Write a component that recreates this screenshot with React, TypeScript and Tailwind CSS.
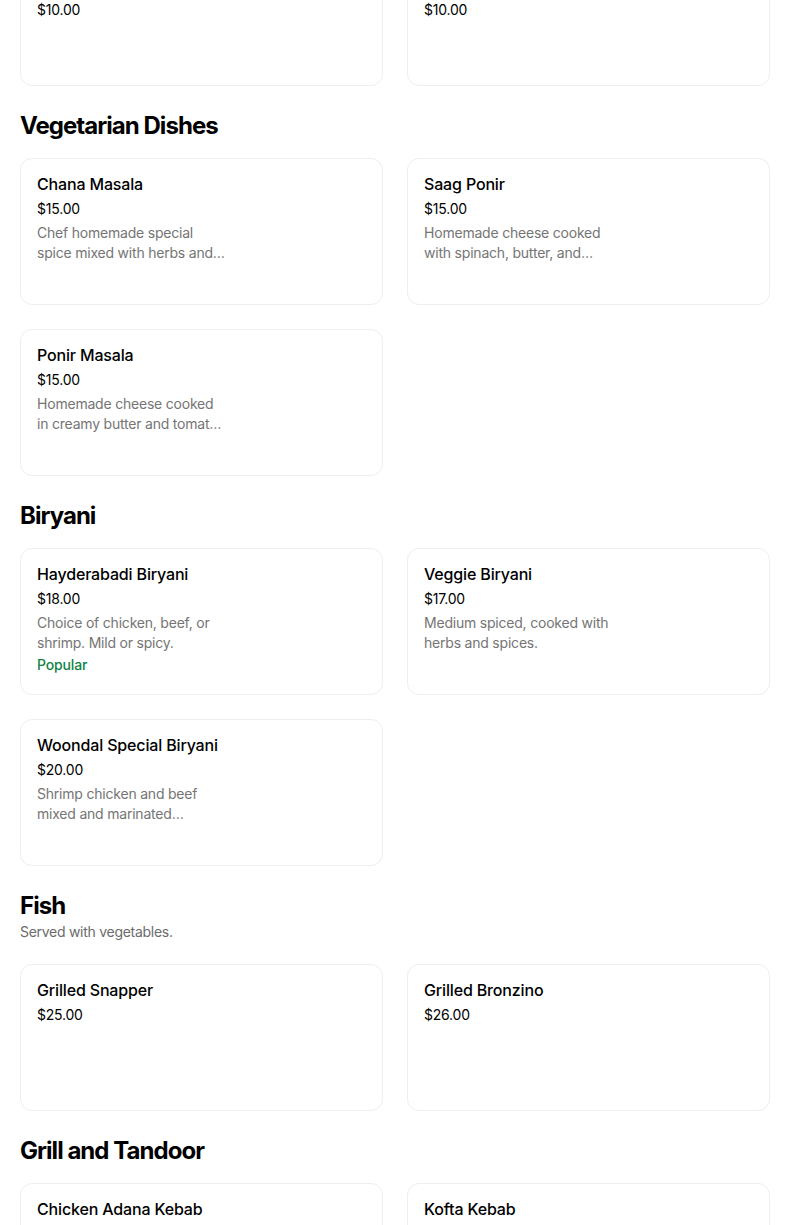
type Item = { name: string; price: string; desc?: string; popular?: boolean };

type Section = { title: string; subtitle?: string; items: Item[] };

const sections: Section[] = [
  {
    title: "Vegetarian Dishes",
    items: [
      { name: "Chana Masala", price: "$15.00", desc: "Chef homemade special spice mixed with herbs and vegetables." },
      { name: "Saag Ponir", price: "$15.00", desc: "Homemade cheese cooked with spinach, butter, and cream." },
      { name: "Ponir Masala", price: "$15.00", desc: "Homemade cheese cooked in creamy butter and tomato sauce." },
    ],
  },
  {
    title: "Biryani",
    items: [
      { name: "Hayderabadi Biryani", price: "$18.00", desc: "Choice of chicken, beef, or shrimp. Mild or spicy.", popular: true },
      { name: "Veggie Biryani", price: "$17.00", desc: "Medium spiced, cooked with herbs and spices." },
      { name: "Woondal Special Biryani", price: "$20.00", desc: "Shrimp chicken and beef mixed and marinated together with special spices." },
    ],
  },
  {
    title: "Fish",
    subtitle: "Served with vegetables.",
    items: [
      { name: "Grilled Snapper", price: "$25.00" },
      { name: "Grilled Bronzino", price: "$26.00" },
    ],
  },
  {
    title: "Grill and Tandoor",
    items: [
      { name: "Chicken Adana Kebab", price: "$18.00" },
      { name: "Kofta Kebab", price: "$18.00" },
    ],
  },
];

function ItemCard({ item, short }: { item: Item; short?: boolean }) {
  return (
    <div className={`${short ? "h-[127px]" : "h-[147px]"} rounded-[12px] border border-[#eeeeee] bg-white px-4 pt-[15px]`}>
      <div className="text-[16px] leading-5 font-medium tracking-[-0.01em] text-black">{item.name}</div>
      <div className="mt-[5px] text-[14px] leading-5 tracking-[-0.015em] text-black">{item.price}</div>
      {item.desc && (
        <p className="mt-1 w-[188px] line-clamp-2 text-[14px] leading-5 tracking-[-0.015em] text-[#757575]">{item.desc}</p>
      )}
      {item.popular && (
        <div className="mt-[2px] text-[14px] leading-5 font-medium tracking-[-0.01em] text-[#0e8345]">Popular</div>
      )}
    </div>
  );
}

export default function App() {
  return (
    <div className="min-h-screen overflow-hidden bg-white font-['Inter',sans-serif]">
      <div className="w-[750px] ml-5">
        <div className="-mt-[41px] grid grid-cols-2 gap-6">
          <ItemCard short item={{ name: "Vegetable Samosa", price: "$10.00" }} />
          <ItemCard short item={{ name: "Chicken Pakora", price: "$10.00" }} />
        </div>

        {sections.map((s) => (
          <section key={s.title}>
            <div className={`pt-6 ${s.subtitle ? "pb-[22px]" : "pb-4"}`}>
              <h2 className="text-[24px] leading-8 font-bold tracking-[-0.04em] text-black">{s.title}</h2>
              {s.subtitle && (
                <p className="text-[14px] leading-5 tracking-[-0.02em] text-[#6b6b6b]">{s.subtitle}</p>
              )}
            </div>
            <div className="grid grid-cols-2 gap-6">
              {s.items.map((it) => (
                <ItemCard key={it.name} item={it} />
              ))}
            </div>
          </section>
        ))}
      </div>
    </div>
  );
}
